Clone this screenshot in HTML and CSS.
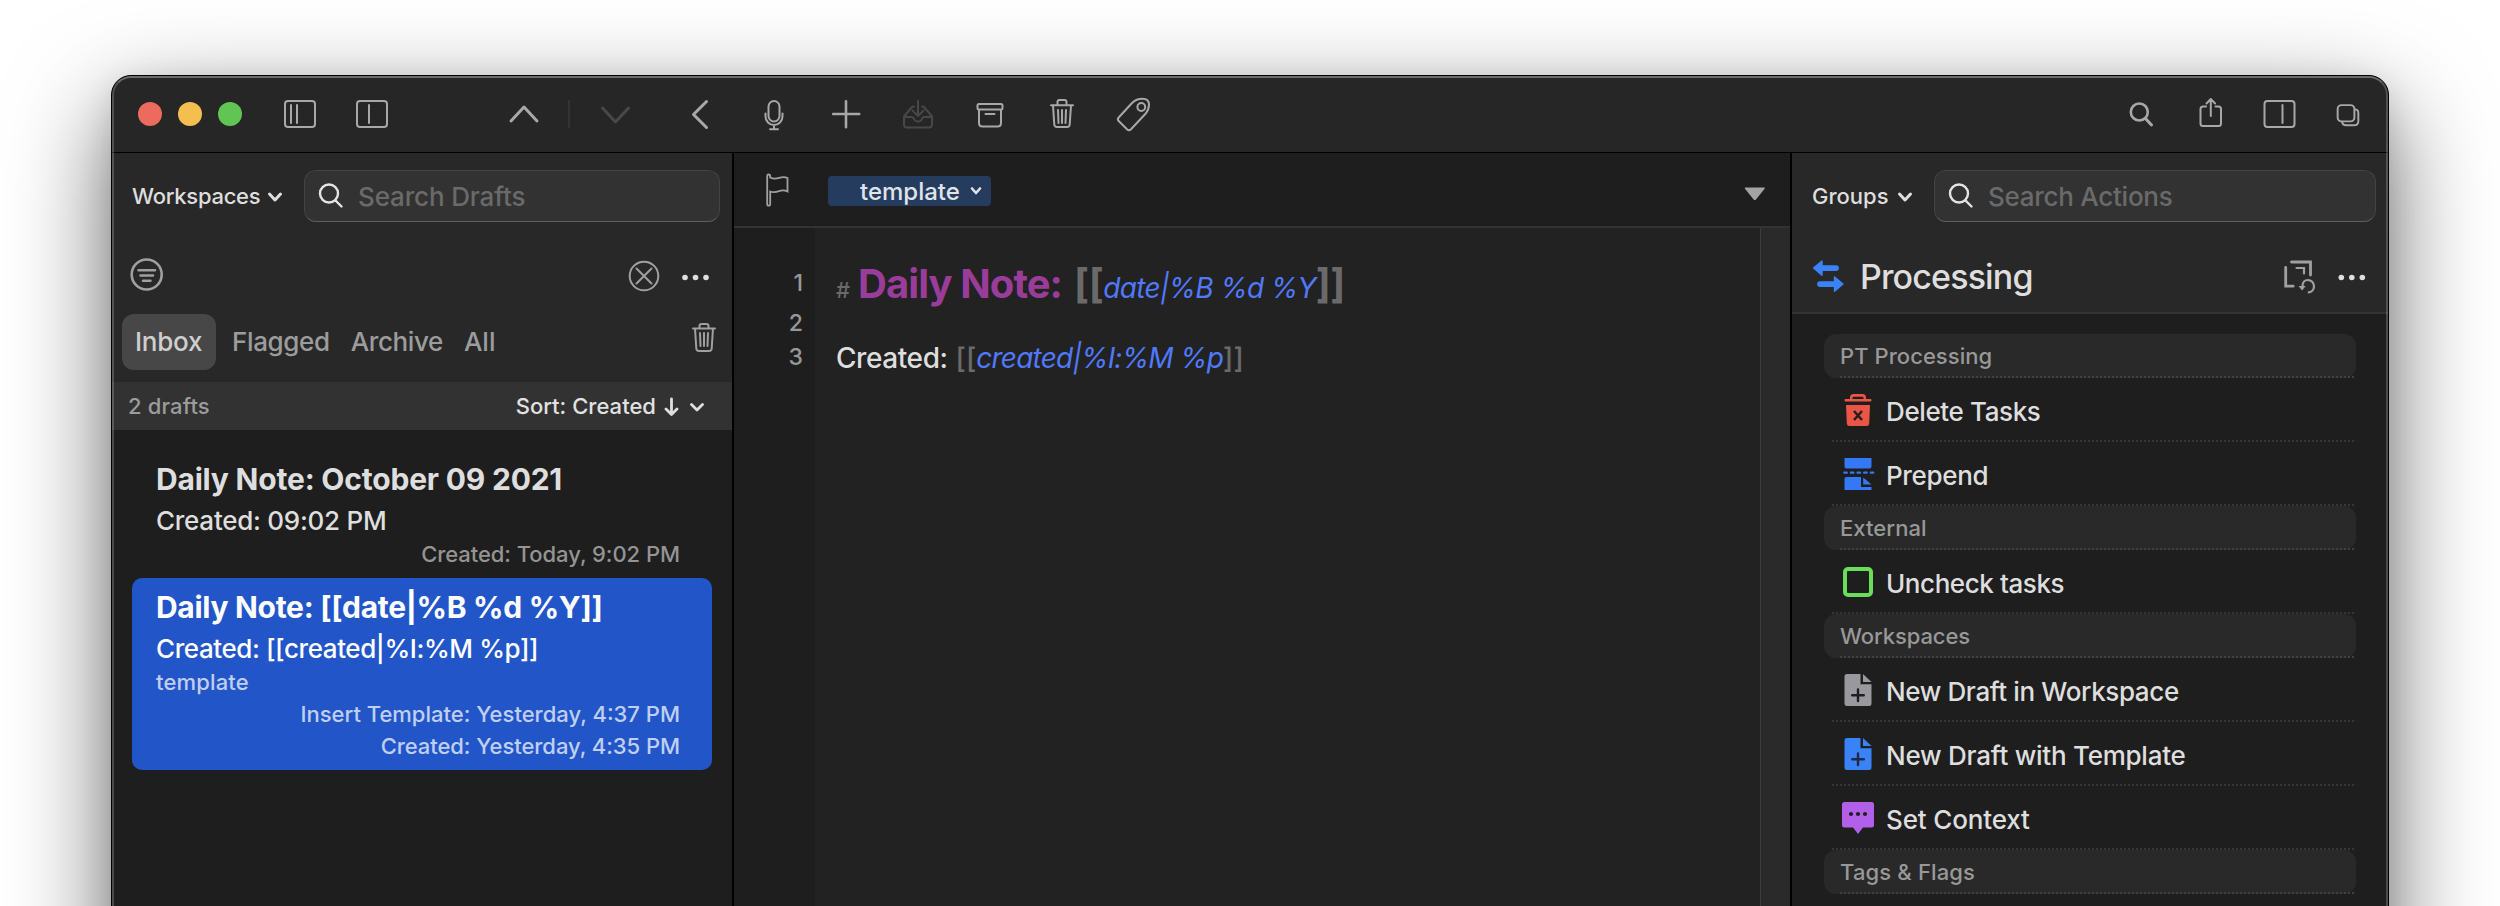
FILE: index.html
```html
<!DOCTYPE html>
<html lang="en">
<head>
<meta charset="utf-8">
<title>Drafts</title>
<link rel="stylesheet" href="styles.css">
</head>
<body>
<div class="stage">
<div class="window">
  <header class="toolbar">
    <div class="lights"><i class="light red"></i><i class="light yellow"></i><i class="light green"></i></div>
    <div class="group">
      <svg class="tool" viewBox="264 94 72 40"><rect x="285" y="101" width="30" height="26" rx="3"/><path d="M291 105v18M297 105v18"/></svg>
      <svg class="tool" viewBox="336 94 72 40"><rect x="357" y="101" width="30" height="26" rx="3"/><path d="M369 105v18"/></svg>
    </div>
    <div class="group nav">
      <svg class="tool wide" viewBox="479 94 90 40"><path class="thick" d="M511 121l13-14 13 14"/></svg>
      <i class="sep"></i>
      <svg class="tool wide dim" viewBox="571 94 90 40"><path class="thick" d="M602.500 108l13 14 13-14"/></svg>
    </div>
    <div class="group compose">
      <svg class="tool" viewBox="666 94 72 40"><path class="thick" d="M706.500 101.500l-13 13 13 13"/></svg>
      <svg class="tool" viewBox="738 94 72 40"><rect x="768.5" y="101" width="11" height="20.500" rx="5.500"/><path d="M765.500 113.500v3a8.500 8.500 0 0 0 17 0v-3M774 125v4M770 129.300h8"/></svg>
      <svg class="tool" viewBox="810 94 72 40"><path class="mid" d="M846 101.200v26M833.200 114h26"/></svg>
      <svg class="tool dim" viewBox="882 94 72 40"><path d="M904 116.500l7.500-9q.8-1 2.500-1M932 116.500l-7.500-9q-.8-1-2.500-1M918 101v14.500M912.500 110.500l5.500 5.500 5.500-5.500M904 117h7.500q2 0 2.500 2 1 2.500 4 2.500t4-2.500q.5-2 2.500-2h7.500v7.500q0 3-3 3h-22q-3 0-3-3z"/></svg>
      <svg class="tool" viewBox="954 94 72 40"><rect x="977.500" y="104" width="25" height="5.500" rx="1.500"/><path d="M979 110v13q0 3.500 3.500 3.500h15q3.500 0 3.500-3.500v-13M985.500 114h9"/></svg>
      <svg class="tool" viewBox="1026 94 72 40"><path d="M1051 105.300h22M1057.500 105v-3q0-2 2-2h5q2 0 2 2v3M1053 105.500l1.300 19q.2 2.500 2.700 2.500h10q2.500 0 2.700-2.500l1.300-19M1058 110l.5 13M1062 110v13M1066 110l-.5 13"/></svg>
      <svg class="tool" viewBox="1098 94 72 40"><path d="M1118.700 117.500L1132 103q4.300-4.200 10.500-4.200 6.500 0 6.500 6 0 5-3.500 9L1131 129.300q-2 1.900-4 0l-8.300-8.300q-1.700-1.700 0-3.500z"/><circle cx="1141.300" cy="107" r="3.900"/></svg>
    </div>
    <div class="group right">
      <svg class="tool r" viewBox="2108 94 68 40"><circle class="mid" cx="2139.800" cy="112" r="8.500"/><path class="thick" d="M2146 118.500l6 6.500"/></svg>
      <svg class="tool r" viewBox="2177 94 68 40"><path d="M2206.500 106.500h-3q-2.500 0-2.500 2.500v14.500q0 2.500 2.500 2.500h15.500q2.500 0 2.500-2.500V109q0-2.500-2.500-2.500h-3M2211.300 116V99.500M2207 103.500l4.300-4.500 4.300 4.500"/></svg>
      <svg class="tool r" viewBox="2246 94 68 40"><rect x="2265" y="101" width="30" height="26" rx="3"/><path d="M2283 105v18"/></svg>
      <svg class="tool r" viewBox="2313 94 68 40"><rect x="2337" y="105" width="17" height="16.500" rx="4"/><path d="M2354.500 109.300q3.500 0 3.500 3.700v8q0 4.500-4.500 4.500h-8q-3.500 0-4-3.500"/></svg>
    </div>
  </header>
  <div class="body">
    <aside class="drafts">
      <div class="searchrow">
        <span class="menu ws">Workspaces</span>
        <svg class="chev" width="16" height="12" viewBox="0 0 16 12"><path d="M2.500 3l5.500 6 5.500-6"/></svg>
        <div class="search"><svg class="glass" width="28" height="28" viewBox="0 0 28 28"><circle cx="11" cy="11.500" r="9"/><path d="M17.500 18.500l6 6"/></svg><span class="sd">Search Drafts</span></div>
      </div>
      <div class="filterrow">
        <svg class="grey" width="36" height="92" viewBox="129 222 36 92"><circle cx="146.700" cy="274.500" r="15" stroke-width="2.600"/><path stroke-width="2.500" d="M138.500 270.300h16.500M140.500 275.500h12.500M143 280.800h7.500"/></svg>
        <svg class="grey last" width="92" height="92" viewBox="620 222 92 92"><circle cx="644" cy="276" r="14.300" stroke-width="2"/><path stroke-width="2" d="M636.500 268.500l15 15M651.500 268.500l-15 15"/><g class="dots"><circle cx="685" cy="277.500" r="2.800"/><circle cx="695.500" cy="277.500" r="2.800"/><circle cx="706" cy="277.500" r="2.800"/></g></svg>
      </div>
      <div class="tabs">
        <span class="tab on">Inbox</span><span class="tab t2">Flagged</span><span class="tab t3">Archive</span><span class="tab t4">All</span>
        <svg class="grey trash" width="28" height="56" viewBox="690 314 28 56"><path stroke-width="2" d="M693 328.500h22M699.500 328.500v-2.500q0-2 2-2h5q2 0 2 2v2.500M695 328.500l1.300 20q.2 2.500 2.700 2.500h10q2.500 0 2.700-2.500l1.300-20M700 333l.5 13M704 333v13M708 333l-.5 13"/></svg>
      </div>
      <div class="sortbar"><span class="count">2 drafts</span><span class="sort">Sort: Created</span>
        <svg class="arrow" width="40" height="20" viewBox="664 396 40 20"><path d="M671.500 399v15M666 409l5.500 5.500 5.500-5.500M691.500 404.500l5.500 5.500 5.500-5.500"/></svg></div>
      <ul class="list">
        <li class="draft"><b class="a">Daily Note: October 09 2021</b><p class="b">Created: 09:02 PM</p><small class="meta">Created: Today, 9:02 PM</small></li>
        <li class="draft selected"><b class="c">Daily Note: [[date|%B %d %Y]]</b><p class="d">Created: [[created|%I:%M %p]]</p><small class="tagname">template</small><small class="meta m1">Insert Template: Yesterday, 4:37 PM</small><small class="meta m2">Created: Yesterday, 4:35 PM</small></li>
      </ul>
    </aside>
    <main class="editor">
      <div class="edhead">
        <svg class="grey flag" width="26" height="40" viewBox="765 171 26 40"><path stroke-width="1.800" d="M767.200 176q0-1.500 1.500-1.500t1.500 1.500v1.500q4 2 9 .3 5-1.600 8.300.2v13.500q-4-2-8.500-.3-5 1.600-8.800.3v12.500q0 1.700-1.500 1.700t-1.500-1.700z"/></svg>
        <span class="pill"><span>template</span><svg width="12" height="10" viewBox="0 0 12 10"><path d="M2 2.500l4 4.500 4-4.500"/></svg></span>
        <svg class="tri" width="24" height="16" viewBox="0 0 24 16"><path d="M2.500 1.500h18.500q1.500 0 .6 1.200L13 13.500q-1.200 1.300-2.400 0L2 2.700q-.9-1.200.5-1.200z"/></svg>
      </div>
      <div class="page">
        <div class="gutter"><span class="n1">1</span><span class="n1">2</span><span class="n3">3</span></div>
        <div class="code">
          <div class="h1"><span class="hash">#</span><span class="title">Daily Note:</span><span class="br">[[</span><i class="date">date|%B %d %Y</i><span class="br">]]</span></div>
          <div class="blank"></div>
          <div class="line"><span class="lbl">Created:</span><span class="br2">[[</span><i class="cr">created|%I:%M %p</i><span class="br2 end">]]</span></div>
        </div>
        <div class="scroll"></div>
      </div>
    </main>
    <aside class="actions">
      <div class="searchrow">
        <span class="menu gr">Groups</span>
        <svg class="chev" width="16" height="12" viewBox="0 0 16 12"><path d="M2.500 3l5.500 6 5.500-6"/></svg>
        <div class="search"><svg class="glass" width="28" height="28" viewBox="0 0 28 28"><circle cx="11" cy="11.500" r="9"/><path d="M17.500 18.500l6 6"/></svg><span class="sa">Search Actions</span></div>
      </div>
      <div class="grouphead">
        <svg class="swap" width="36" height="90" viewBox="1810 222 36 90"><path d="M1812.500 268l9-7.500q1.200-.8 1.200.8v3.900h13.300a2.900 2.900 0 0 1 0 5.800h-13.300v3.900q0 1.600-1.200.8zM1844 284l-9-7.500q-1.200-.8-1.200.8v3.900h-13.800a2.900 2.900 0 0 0 0 5.800h13.800v3.900q0 1.600 1.200.8z"/></svg>
        <h2>Processing</h2>
        <svg class="grey last" width="86" height="90" viewBox="2282 222 86 90"><path stroke-width="2.800" d="M2291.500 262h19v13M2285.700 267.500v18.700h7.500"/><path stroke-width="2.200" d="M2296.500 268h7.500v5.500M2302.500 286c0-4 2.500-6 5.300-6 3.500 0 6.200 2.800 6.200 6.300s-2.500 5.700-5.200 6"/><path class="fill" d="M2298.500 286h7.200l-3.600 4.500z"/><g class="dots"><circle cx="2341.300" cy="277.500" r="2.800"/><circle cx="2351.800" cy="277.500" r="2.800"/><circle cx="2362.300" cy="277.500" r="2.800"/></g></svg>
      </div>
      <div class="alist">
        <div class="sec s1">PT Processing</div>
        <div class="act"><svg width="34" height="34" viewBox="1841 393 34 34"><path fill="#eb5545" d="M1845.500 399h4.500v-1.500q0-3.500 3.500-3.500h9q3.500 0 3.500 3.500v1.500h4.500q1 0 1 1.200t-1 1.300h-25q-1 0-1-1.300t1-1.200zM1852.500 399h11v-1q0-1.200-1.200-1.200h-8.600q-1.200 0-1.200 1.200zM1846 405h24l-.8 18.500q-.2 2.500-2.700 2.500h-17q-2.500 0-2.700-2.500z" fill-rule="evenodd"/><path stroke="#1e1e1e" stroke-width="2.400" d="M1854 411l8 9M1862 411l-8 9"/></svg><span class="l1">Delete Tasks</span></div>
        <div class="act"><svg width="34" height="34" viewBox="1841 457 34 34"><g fill="#3478f6"><path d="M1844.500 458h27v8q0 2.600-2.600 2.600h-21.800q-2.600 0-2.600-2.600zM1844.500 479q0-2 2-2h14.500v10h10.500v3h-27zM1863.200 477.500l8.300 7h-8.300z"/></g><path stroke="#3478f6" stroke-width="2.200" stroke-linecap="round" stroke-dasharray="2.600 4" d="M1844.300 472.700h30"/></svg><span class="l2">Prepend</span></div>
        <div class="sec s2">External</div>
        <div class="act"><svg width="34" height="34" viewBox="1841 565 34 34"><rect x="1845" y="569" width="26" height="26" rx="3" fill="none" stroke="#6ade5b" stroke-width="4"/></svg><span class="l3">Uncheck tasks</span></div>
        <div class="sec s3">Workspaces</div>
        <div class="act"><svg width="34" height="34" viewBox="1841 673 34 34"><path fill="#98989d" d="M1844.500 676.500q0-2.500 2.500-2.500h13.500v10.300h11v19.200q0 2.500-2.500 2.500h-22q-2.500 0-2.500-2.500zM1863 674l8.500 8h-8.500z"/><path stroke="#1e1e1e" stroke-width="2.400" stroke-linecap="round" d="M1858 689.500v11.500M1852.200 695.200h11.600"/></svg><span class="l4">New Draft in Workspace</span></div>
        <div class="act"><svg width="34" height="34" viewBox="1841 673 34 34"><path fill="#3a82f7" d="M1844.500 676.500q0-2.500 2.500-2.500h13.500v10.300h11v19.200q0 2.500-2.500 2.500h-22q-2.500 0-2.500-2.500zM1863 674l8.500 8h-8.500z"/><path stroke="#1e2a45" stroke-width="2.400" stroke-linecap="round" d="M1858 689.500v11.500M1852.200 695.200h11.600"/></svg><span class="l5">New Draft with Template</span></div>
        <div class="act"><svg width="34" height="34" viewBox="1841 801 34 34"><path fill="#b260ea" d="M1842 804.500q0-2.500 2.500-2.500h27q2.500 0 2.500 2.500v20.500q0 2.500-2.500 2.500h-8.500l-5 6.500-5-6.500h-8.500q-2.500 0-2.500-2.500z"/><g fill="#1e1e1e"><circle cx="1851" cy="814" r="2.100"/><circle cx="1858" cy="814" r="2.100"/><circle cx="1865" cy="814" r="2.100"/></g></svg><span class="l6">Set Context</span></div>
        <div class="sec s4">Tags &amp; Flags</div>
      </div>
    </aside>
  </div>
</div>
</div>
</body>
</html>
```
FILE: styles.css
```css
* { box-sizing: border-box; }
body { margin: 0; background: #fff; font-family: Inter, "Liberation Sans", sans-serif; font-weight: 450; color: #dedede; white-space: nowrap; }
svg { flex: none; display: block; fill: none; }
.stage { height: 906px; padding: 75px 111px 0; overflow: hidden; }
.window { position: relative; width: 2278px; height: 1200px; border: 1px solid #000; border-radius: 20px; background: #1e1e1e; overflow: hidden; box-shadow: 0 36px 100px rgba(0,0,0,.6), 0 8px 30px rgba(0,0,0,.1); }
.window::after { content: ""; position: absolute; inset: 0; border-radius: 19px; border: 2px solid rgba(255,255,255,.2); border-top-color: rgba(255,255,255,.32); pointer-events: none; }

.toolbar { display: flex; align-items: center; height: 77px; background: #262626; border-bottom: 1px solid #000; }
.lights { display: flex; gap: 16px; margin-left: 26px; width: 126px; }
.light { width: 24px; height: 24px; border-radius: 50%; }
.red { background: #ec6a5e; }
.yellow { background: #f4bf4f; }
.green { background: #61c554; }
.group { display: flex; align-items: center; }
.tool { width: 72px; height: 40px; stroke: #a8a8a8; stroke-width: 2; stroke-linecap: round; stroke-linejoin: round; }
.tool .thick { stroke-width: 3; }
.tool .mid { stroke-width: 2.600; }
.tool.wide { width: 90px; }
.tool.dim { stroke: #484848; }
.tool.r { width: 69px; }
.tool.r:last-child { width: 67px; }
.nav { margin-left: 71px; }
.sep { width: 2px; height: 28px; background: #333; margin: 0 0 0 -1px; }
.nav .dim { margin-left: 1px; }
.compose { margin-left: 5px; }
.right { margin-left: auto; margin-right: 7px; }

.body { display: flex; height: 1121px; }
.drafts { width: 622px; border-right: 2px solid #000; background: #282828; display: flex; flex-direction: column; }
.searchrow { display: flex; align-items: center; height: 69px; padding: 17px 12px 0 0; }
.menu { font-size: 22px; font-weight: 500; line-height: 52px; }
.ws { margin-left: 20px; width: 135px; letter-spacing: -.27px; }
.gr { margin-left: 20px; width: 85px; letter-spacing: 0; }
.chev { stroke: #dedede; stroke-width: 3; stroke-linecap: round; stroke-linejoin: round; margin-top: 1px; }
.search { margin-left: 21px; flex: 1; height: 52px; border: 1px solid #434343; border-bottom: 1px solid #5e5e5e; border-radius: 12px; background: #323232; display: flex; align-items: center; padding-left: 13px; font-size: 26px; color: #6a6a6a; }
.glass { stroke: #e4e4e4; stroke-width: 2.400; stroke-linecap: round; margin-right: 12px; }
.sd { letter-spacing: -.15px; }
.sa { letter-spacing: -.27px; }
.filterrow { display: flex; height: 92px; padding: 0 20px 0 17px; }
.grey { stroke: #a0a0a0; stroke-linecap: round; }
.last { margin-left: auto; }
.dots { fill: #dedede; stroke: none; }
.tabs { display: flex; height: 68px; padding: 0 14px 12px 10px; line-height: 55px; font-size: 26px; color: #9c9c9c; }
.tab.on { width: 94px; padding-left: 13px; letter-spacing: -.25px; color: #cfcfcf; background: #474747; border-radius: 12px; }
.t2 { margin-left: 16px; letter-spacing: -.35px; }
.t3 { margin-left: 21px; letter-spacing: -.4px; }
.t4 { margin-left: 21px; }
.trash { margin-left: auto; }
.sortbar { display: flex; align-items: center; height: 48px; background: #323232; padding: 0 28px 0 16px; font-size: 22px; }
.count { color: #9c9c9c; letter-spacing: .15px; }
.sort { margin-left: auto; font-weight: 500; letter-spacing: .02px; color: #e2e2e2; }
.arrow { margin-left: 8px; stroke: #dedede; stroke-width: 2.800; stroke-linecap: round; stroke-linejoin: round; }
.list { flex: 1; margin: 0; padding: 20px 20px 0; list-style: none; background: #1e1e1e; }
.draft { display: flex; flex-direction: column; padding: 7px 32px 8px 24px; border-radius: 10px; }
.draft b { font-size: 30px; line-height: 44px; font-weight: 650; }
.draft p { margin: 0; font-size: 26px; line-height: 35px; padding-top: 2px; }
.draft small { font-size: 22px; line-height: 32px; }
.a { letter-spacing: -.2px; }
.b { letter-spacing: -.26px; }
.c { letter-spacing: -.3px; }
.d { letter-spacing: -.42px; }
.meta { align-self: flex-end; color: #949494; letter-spacing: -.06px; }
.tagname { letter-spacing: .15px; }
.m1 { letter-spacing: 0; }
.selected { background: #2256c8; color: #fff; }
.selected small { color: #c0cff0; }

.editor { width: 1058px; border-right: 2px solid #000; display: flex; flex-direction: column; }
.edhead { display: flex; align-items: center; height: 75px; padding-top: 3px; border-bottom: 2px solid #333; }
.flag { margin-left: 31px; }
.pill { margin-left: 37px; width: 163px; height: 30px; border-radius: 4px; background: #263c5e; display: flex; align-items: center; padding-left: 32px; font-size: 24px; font-weight: 500; line-height: 30px; color: #dfe3ea; }
.pill span { width: 110px; padding-top: 2px; }
.pill svg { stroke: #dfe3ea; stroke-width: 2.600; stroke-linecap: round; stroke-linejoin: round; }
.tri { margin-left: auto; margin-right: 23px; margin-top: 5px; fill: #a4a4a4; }
.page { display: flex; flex: 1; }
.gutter { width: 81px; padding: 35px 12px 0 0; text-align: right; font-size: 23px; color: #989898; }
.gutter span { display: block; line-height: 40px; }
.gutter .n3 { line-height: 28px; }
.code { flex: 1; background: #222; padding: 36px 0 0 21px; }
.h1 { height: 40px; line-height: 40px; font-size: 40px; font-weight: 700; }
.h1 span, .h1 i { line-height: 1; }
.hash { font-size: 22px; font-weight: 500; color: #6a6a6a; margin-right: 8px; }
.title { color: #9a3d9a; letter-spacing: -.93px; margin-right: 12px; }
.br { color: #6a6a6a; letter-spacing: -.5px; }
.date { font-size: 28px; font-weight: 450; color: #5079fa; letter-spacing: -.68px; }
.blank { height: 39px; }
.line { font-size: 28px; line-height: 30px; }
.lbl { letter-spacing: -.42px; margin-right: 8px; }
.br2 { color: #6a6a6a; }
.cr { color: #5079fa; letter-spacing: -.78px; }
.scroll { width: 30px; background: #2a2a2a; border-left: 1px solid #3c3c3c; }

.actions { width: 596px; background: #282828; display: flex; flex-direction: column; }
.grouphead { display: flex; height: 92px; border-bottom: 2px solid #333; padding: 0 20px 0 18px; }
.swap { fill: #3a82f7; }
.grouphead h2 { margin: 0 0 0 14px; font-size: 34px; font-weight: 500; line-height: 110px; letter-spacing: -.85px; }
.fill { fill: #a0a0a0; stroke: none; }
.alist { flex: 1; background: #1e1e1e; padding: 20px 32px 0; }
.sec { position: relative; height: 44px; border-radius: 12px; background: #292929; padding-left: 16px; font-size: 22px; line-height: 45px; font-weight: 550; color: #989898; }
.sec::after, .act::after { content: ""; position: absolute; right: 2px; bottom: 0; height: 2px; left: 16px; background: repeating-linear-gradient(90deg, #424242 0 2px, transparent 2px 4px); }
.act { position: relative; display: flex; align-items: center; height: 64px; padding-left: 17px; font-size: 26px; }
.act::after { left: 8px; background: repeating-linear-gradient(90deg, #373737 0 2px, transparent 2px 4px); }
.act span { margin-left: 11px; padding-top: 3px; }
.s1, .s2 { letter-spacing: .05px; }
.s3 { letter-spacing: -.1px; }
.s4 { letter-spacing: .15px; }
.l1 { letter-spacing: -.38px; }
.l2 { letter-spacing: -.34px; }
.l3 { letter-spacing: -.42px; }
.l4 { letter-spacing: -.38px; }
.l5 { letter-spacing: -.25px; }
.l6 { letter-spacing: -.15px; }
```
